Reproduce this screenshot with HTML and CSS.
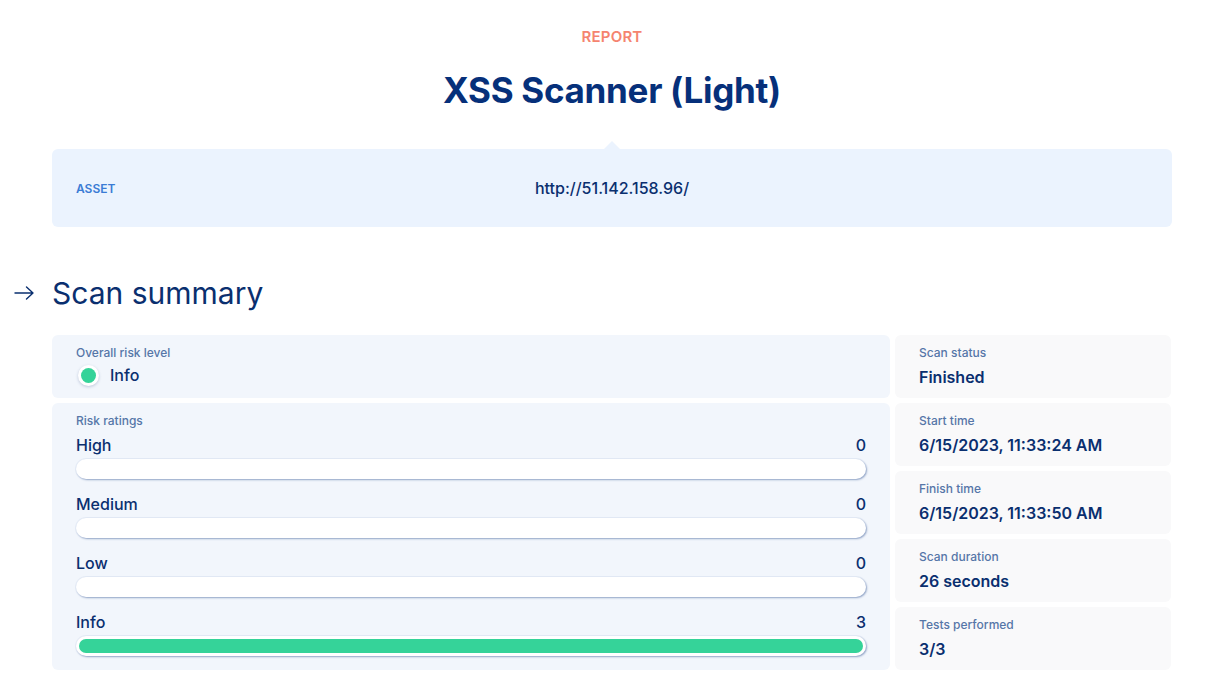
FILE: index.html
```html
<!DOCTYPE html>
<html>
<head>
<meta charset="utf-8">
<link rel="stylesheet" href="styles.css">
</head>
<body>
<div class="page">
  <header class="hero">
    <div class="eyebrow">REPORT</div>
    <h1 class="title">XSS Scanner (Light)</h1>
  </header>
  <section class="asset">
    <span class="asset-label">ASSET</span>
    <span class="asset-url">http://51.142.158.96/</span>
    <span class="asset-spacer"></span>
  </section>

  <h2 class="section-title">
    <svg class="arrow" width="20" height="14" viewBox="0 0 20 14" aria-hidden="true">
      <path d="M1 7H19M12.5 1L19 7L12.5 13" fill="none" stroke="#0a2f6f" stroke-width="1.4" stroke-linecap="round" stroke-linejoin="round"/>
    </svg>
    Scan summary
  </h2>

  <div class="summary">
    <div class="col-left">
      <div class="card card-blue card-top">
        <div class="label">Overall risk level</div>
        <div class="risk-row">
          <span class="dot"><span class="dot-in"></span></span>
          <span class="risk-value">Info</span>
        </div>
      </div>
      <div class="card card-blue card-grow">
        <div class="label">Risk ratings</div>
        <div class="rating">
          <div class="rating-head"><span>High</span><span>0</span></div>
          <div class="bar"></div>
        </div>
        <div class="rating">
          <div class="rating-head"><span>Medium</span><span>0</span></div>
          <div class="bar"></div>
        </div>
        <div class="rating">
          <div class="rating-head"><span>Low</span><span>0</span></div>
          <div class="bar"></div>
        </div>
        <div class="rating">
          <div class="rating-head"><span>Info</span><span>3</span></div>
          <div class="bar"><div class="fill" style="width:100%"></div></div>
        </div>
      </div>
    </div>
    <div class="col-right">
      <div class="card card-gray">
        <div class="label">Scan status</div>
        <div class="value">Finished</div>
      </div>
      <div class="card card-gray">
        <div class="label">Start time</div>
        <div class="value">6/15/2023, 11:33:24 AM</div>
      </div>
      <div class="card card-gray">
        <div class="label">Finish time</div>
        <div class="value">6/15/2023, 11:33:50 AM</div>
      </div>
      <div class="card card-gray">
        <div class="label">Scan duration</div>
        <div class="value">26 seconds</div>
      </div>
      <div class="card card-gray">
        <div class="label">Tests performed</div>
        <div class="value">3/3</div>
      </div>
    </div>
  </div>
</div>
</body>
</html>
```

FILE: styles.css
```css
* { box-sizing: border-box; }
html, body { margin: 0; padding: 0; background: #fff; }
body {
  font-family: Inter, "Noto Sans", sans-serif;
  color: #0a2f6f;
}
.page {
  width: 1120px;
  margin: 0 0 0 52px;
  padding: 28px 0 40px;
}
.hero { text-align: center; }
.eyebrow {
  color: #f5846f;
  font-size: 15px;
  font-weight: 600;
  line-height: 18px;
  letter-spacing: 0.2px;
}
.title {
  margin: 22px 0 0;
  font-size: 35px;
  line-height: 44px;
  font-weight: 700;
  color: #06307a;
  letter-spacing: -0.3px;
}
.asset {
  position: relative;
  margin-top: 37px;
  height: 78px;
  background: #ebf3fe;
  border-radius: 6px;
  display: flex;
  align-items: center;
  padding: 0 24px;
}
.asset::before {
  content: "";
  position: absolute;
  top: -8px;
  left: 50%;
  margin-left: -8px;
  border-left: 8px solid transparent;
  border-right: 8px solid transparent;
  border-bottom: 8px solid #ebf3fe;
}
.asset-label {
  flex: 1;
  font-size: 12px;
  font-weight: 600;
  color: #3a7bd5;
}
.asset-url {
  font-size: 16px;
  font-weight: 500;
  color: #0a2f6f;
}
.asset-spacer { flex: 1; }
.section-title {
  margin: 48px 0 24px;
  font-size: 30px;
  line-height: 36px;
  font-weight: 400;
  color: #0a2f6f;
  display: flex;
  align-items: center;
}
.arrow {
  margin-left: -38px;
  margin-right: 18px;
  flex: none;
}
.summary {
  display: grid;
  grid-template-columns: 1fr 276px;
  gap: 5px;
  width: 1119px;
}
.col-left, .col-right {
  display: flex;
  flex-direction: column;
  gap: 5px;
}
.card {
  border-radius: 6px;
  padding: 10px 24px 10px;
}
.card-blue { background: #f2f6fc; }
.card-top { height: 63px; }
.card-gray { background: #f9f9fa; height: 63px; }
.card-grow { flex: 1; padding-top: 10px; padding-bottom: 12px; }
.label {
  font-size: 12px;
  line-height: 16px;
  font-weight: 500;
  color: #5676a8;
}
.value {
  margin-top: 5px;
  font-size: 16px;
  line-height: 22px;
  font-weight: 600;
  color: #0a2f6f;
}
.risk-row {
  margin-top: 4px;
  display: flex;
  align-items: center;
  height: 20px;
}
.dot {
  width: 21px;
  height: 21px;
  border-radius: 50%;
  background: #fff;
  box-shadow: 0 1px 3px rgba(30, 60, 120, 0.25);
  display: flex;
  align-items: center;
  justify-content: center;
  margin-left: 2px;
}
.dot-in {
  width: 15px;
  height: 15px;
  border-radius: 50%;
  background: #35d399;
}
.risk-value {
  margin-left: 11px;
  font-size: 16px;
  font-weight: 500;
  color: #0a2f6f;
}
.rating { margin-top: 6px; }
.rating + .rating { margin-top: 15px; }
.rating-head {
  display: flex;
  justify-content: space-between;
  font-size: 16px;
  line-height: 20px;
  font-weight: 500;
  color: #0a2f6f;
  margin-bottom: 4px;
}
.bar {
  height: 20px;
  border-radius: 10px;
  background: #fff;
  box-shadow: 1px 1px 2px rgba(40, 75, 140, 0.45), 0 0 0 1px rgba(60, 100, 170, 0.06);
  padding: 3px;
}
.fill {
  height: 14px;
  border-radius: 7px;
  background: #35d399;
}
```
